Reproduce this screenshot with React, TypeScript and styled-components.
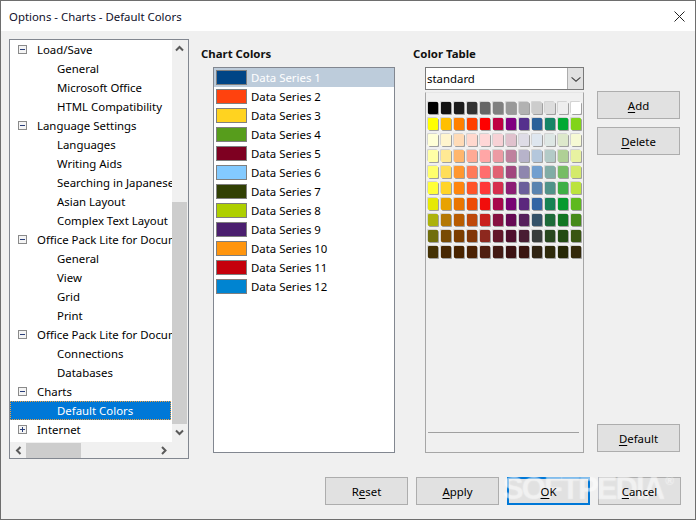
import React from "react";
import styled, { createGlobalStyle } from "styled-components";

const Global = createGlobalStyle`
  html, body { margin: 0; padding: 0; background: #f0f0f0; }
  * { box-sizing: border-box; }
  u { text-underline-offset: 2px; text-decoration-thickness: 1px; }
`;

const Window = styled.div`
  position: relative;
  width: 696px;
  height: 520px;
  border: 1px solid #6e6e6e;
  background: #f0f0f0;
  font-family: "Noto Sans", "Open Sans", sans-serif;
  font-size: 11.4px;
  color: #000;
  overflow: hidden;
  display: flex;
  flex-direction: column;
`;
const TitleBar = styled.div`
  height: 30px;
  flex: none;
  background: #fff;
  display: flex;
  align-items: center;
  justify-content: space-between;
  padding: 0 10px 0 8px;
  color: #10102a;
`;
const Main = styled.div`
  display: flex;
  height: 420px;
  margin: 8px 0 0 8px;
  flex: none;
`;
const Tree = styled.div`
  width: 180px;
  height: 420px;
  flex: none;
  border: 1px solid #828790;
  display: grid;
  grid-template-columns: 162px 16px;
  grid-template-rows: 402px 16px;
`;
const TreeRows = styled.div`
  background: #fff;
  overflow: hidden;
  min-width: 0;
`;
const TreeRow = styled.div<{ $level: number; $selected?: boolean }>`
  height: 19px;
  line-height: 18px;
  display: flex;
  align-items: center;
  white-space: nowrap;
  overflow: hidden;
  padding-left: ${(p) => (p.$level === 0 ? 8 : 47)}px;
  margin-right: ${(p) => (p.$selected ? 1 : 0)}px;
  background: ${(p) => (p.$selected ? "#0078d7" : "transparent")};
  color: ${(p) => (p.$selected ? "#fff" : "#000")};
  outline: ${(p) => (p.$selected ? "1px dotted #f0a040" : "none")};
  outline-offset: -1px;
`;
const Expander = styled.svg`
  width: 9px;
  height: 9px;
  flex: none;
  margin-right: 10px;
`;
const VScroll = styled.div`
  background: #f0f0f0;
  display: flex;
  flex-direction: column;
  align-items: flex-start;
`;
const ArrowBox = styled.div`
  height: 17px;
  width: 15px;
  flex: none;
  display: flex;
  align-items: center;
  justify-content: center;
`;
const VSpace = styled.div`
  height: 145px;
  flex: none;
`;
const VThumb = styled.div`
  width: 15px;
  height: 222px;
  flex: none;
  background: #cdcdcd;
`;
const HScroll = styled.div`
  background: #f0f0f0;
  display: flex;
  align-items: center;
`;
const HArrowBox = styled.div`
  width: 16px;
  height: 16px;
  flex: none;
  display: flex;
  align-items: center;
  justify-content: center;
`;
const HThumb = styled.div`
  width: 55px;
  height: 15px;
  flex: none;
  background: #cdcdcd;
`;
const HSpace = styled.div`
  flex: 1;
`;
const Corner = styled.div`
  background: #f0f0f0;
`;
const Column = styled.div<{ $width: number; $gap: number }>`
  width: ${(p) => p.$width}px;
  margin-left: ${(p) => p.$gap}px;
  flex: none;
`;
const Heading = styled.div`
  font-weight: 700;
  line-height: 18px;
  margin: 6px 0 4px;
  color: #111;
`;
const SeriesList = styled.div`
  margin-left: 12px;
  width: 182px;
  height: 386px;
  background: #fff;
  border: 1px solid #828790;
`;
const SeriesRow = styled.div<{ $selected?: boolean }>`
  height: 19px;
  display: flex;
  align-items: center;
  padding-left: 2px;
  background: ${(p) => (p.$selected ? "#bdccdb" : "transparent")};
  color: ${(p) => (p.$selected ? "#fff" : "#000")};
`;
const SeriesSwatch = styled.div<{ $color: string }>`
  width: 31px;
  height: 15px;
  flex: none;
  margin-right: 4px;
  border: 1px solid #7f7f7f;
  background: ${(p) => p.$color};
`;
const Combo = styled.div`
  margin-left: 12px;
  width: 159px;
  height: 23px;
  display: flex;
  background: #fff;
  border: 1px solid #7a7a7a;
  align-items: stretch;
`;
const ComboText = styled.div`
  flex: 1;
  padding-left: 1px;
  line-height: 21px;
`;
const ComboButton = styled.div`
  width: 16px;
  background: #e1e1e1;
  border-left: 1px solid #adadad;
  display: flex;
  align-items: center;
  justify-content: center;
`;
const TablePanel = styled.div`
  margin: 2px 0 0 12px;
  width: 159px;
  height: 361px;
  border: 1px solid #a6a6a6;
  border-top-color: #e6e6e6;
  display: flex;
  flex-direction: column;
  padding: 9px 0 0 2px;
`;
const Palette = styled.div`
  display: grid;
  grid-template-columns: repeat(12, 10px);
  grid-auto-rows: 12px;
  column-gap: 3px;
  row-gap: 4px;
`;
const Cell = styled.div<{ $color: string }>`
  background: ${(p) => p.$color};
  border-radius: 1px;
  box-shadow: 1px 1px 0 #a0a0a0, -1px -1px 0 rgba(160, 160, 160, 0.35);
`;
const TableRule = styled.div`
  margin: auto 4px 19px 0;
  height: 1px;
  background: #a0a0a0;
`;
const ButtonColumn = styled.div`
  width: 83px;
  margin-left: 13px;
  flex: none;
  display: flex;
  flex-direction: column;
  gap: 8px;
  padding: 52px 0 7px;
`;
const Btn = styled.div<{ $focus?: boolean }>`
  width: 83px;
  height: 28px;
  flex: none;
  background: #e1e1e1;
  border: ${(p) => (p.$focus ? "2px solid #0078d7" : "1px solid #adadad")};
  display: flex;
  align-items: center;
  justify-content: center;
  line-height: 16px;
  padding-top: 2px;
`;
const BtnLabel = styled.span`
  position: relative;
  z-index: 2;
`;
const PushDown = styled.div`
  flex: 1;
`;
const Footer = styled.div`
  display: flex;
  gap: 8px;
  margin: 18px 0 0 324px;
`;
const Watermark = styled.div`
  position: absolute;
  z-index: 1;
  left: 502px;
  top: 462px;
  font-family: "Liberation Sans", sans-serif;
  font-weight: 700;
  font-size: 31px;
  line-height: 36px;
  letter-spacing: -1.9px;
  color: rgba(255, 255, 255, 0.32);
  text-shadow: 0 0 2px rgba(255, 255, 255, 0.4);
  pointer-events: none;
  white-space: nowrap;
`;
const WatermarkMark = styled.span`
  font-size: 12px;
  letter-spacing: 0;
  vertical-align: 14px;
  margin-left: 2px;
`;

const tree: [number, string, ("minus" | "plus")?, boolean?][] = [
  [0, "Load/Save", "minus"],
  [1, "General"],
  [1, "Microsoft Office"],
  [1, "HTML Compatibility"],
  [0, "Language Settings", "minus"],
  [1, "Languages"],
  [1, "Writing Aids"],
  [1, "Searching in Japanese"],
  [1, "Asian Layout"],
  [1, "Complex Text Layout"],
  [0, "Office Pack Lite for Documents", "minus"],
  [1, "General"],
  [1, "View"],
  [1, "Grid"],
  [1, "Print"],
  [0, "Office Pack Lite for Documents", "minus"],
  [1, "Connections"],
  [1, "Databases"],
  [0, "Charts", "minus"],
  [1, "Default Colors", undefined, true],
  [0, "Internet", "plus"],
];

const series = ["#004586","#ff420e","#ffd320","#579d1c","#7e0021","#83caff","#314004","#aecf00","#4b1f6f","#ff950e","#c5000b","#0084d1"];

const palette = [
  "#000000","#111111","#1c1c1c","#333333","#666666","#808080","#999999","#b2b2b2","#cccccc","#dddddd","#eeeeee","#ffffff",
  "#ffff00","#ffbf00","#ff8000","#ff4000","#ff0000","#bf0041","#800080","#55308d","#2a6099","#158466","#00a933","#81d41a",
  "#ffffd7","#fff5ce","#ffdbb6","#ffd8ce","#ffd7d7","#f7d1d5","#e0c2cd","#dedce6","#dee6ef","#dee7e5","#dde8cb","#f6f9d4",
  "#ffffa6","#ffe994","#ffb66c","#ffaa95","#ffa6a6","#ec9ba4","#bf819e","#b7b3ca","#b4c7dc","#b3cac7","#afd095","#e8f2a1",
  "#ffff6d","#ffde59","#ff972f","#ff7b59","#ff6d6d","#e16173","#a1467e","#8e86ae","#729fcf","#81aca6","#77bc65","#d4ea6b",
  "#ffff38","#ffd428","#ff860d","#ff5429","#ff3838","#d62e4e","#8d1d75","#6b5e9b","#5983b0","#50938a","#3faf46","#bbe33d",
  "#e6e905","#e8a202","#ea7500","#ed4c05","#f10d0c","#a7074b","#780373","#5b277d","#3465a4","#168253","#069a2e","#5eb91e",
  "#acb20c","#b47804","#b85c00","#be480a","#c9211e","#861141","#650953","#55215b","#355269","#1e6a39","#127622","#468a1a",
  "#706e0c","#784b04","#7b3d00","#813709","#8d281e","#611729","#4e102d","#481d32","#383d3c","#28471f","#224b12","#395511",
  "#443205","#472702","#482300","#4b2204","#4f1f10","#431a14","#3c1212","#3a1510","#2f2312","#2e2a0b","#262806","#33290a",
];

const ExpandIcon = ({ kind }: { kind: "minus" | "plus" }) => (
  <Expander viewBox="0 0 9 9">
    <rect x="0.5" y="0.5" width="8" height="8" fill="#f4f4f4" stroke="#8a8a8a" />
    <path d={kind === "minus" ? "M2 4.5H7" : "M2 4.5H7M4.5 2V7"} stroke="#2a3f7a" fill="none" />
  </Expander>
);

const Chevron = ({ d, w = 9, h = 9, stroke = "#5a5a5a", sw = 2 }: { d: string; w?: number; h?: number; stroke?: string; sw?: number }) => (
  <svg width={w} height={h} viewBox="0 0 9 9" fill="none">
    <path d={d} stroke={stroke} strokeWidth={sw} />
  </svg>
);

export default function App() {
  return (
    <Window>
      <Global />
      <TitleBar>
        <span>Options - Charts - Default Colors</span>
        <svg width="11" height="11" viewBox="0 0 11 11" fill="none">
          <path d="M0.5 0.5L10.5 10.5M10.5 0.5L0.5 10.5" stroke="#222" />
        </svg>
      </TitleBar>
      <Main>
        <Tree>
          <TreeRows>
            {tree.map(([level, label, exp, sel], i) => (
              <TreeRow key={i} $level={level} $selected={sel}>
                {exp && <ExpandIcon kind={exp} />}
                {label}
              </TreeRow>
            ))}
          </TreeRows>
          <VScroll>
            <ArrowBox><Chevron d="M1 6.5L4.5 3L8 6.5" /></ArrowBox>
            <VSpace />
            <VThumb />
            <ArrowBox><Chevron d="M1 2.5L4.5 6L8 2.5" /></ArrowBox>
          </VScroll>
          <HScroll>
            <HArrowBox><Chevron d="M6.5 1L3 4.5L6.5 8" /></HArrowBox>
            <HThumb />
            <HSpace />
            <HArrowBox><Chevron d="M2 1L5.5 4.5L2 8" /></HArrowBox>
          </HScroll>
          <Corner />
        </Tree>
        <Column $width={194} $gap={12}>
          <Heading>Chart Colors</Heading>
          <SeriesList>
            {series.map((c, i) => (
              <SeriesRow key={c} $selected={i === 0}>
                <SeriesSwatch $color={c} />
                Data Series {i + 1}
              </SeriesRow>
            ))}
          </SeriesList>
        </Column>
        <Column $width={171} $gap={18}>
          <Heading>Color Table</Heading>
          <Combo>
            <ComboText>standard</ComboText>
            <ComboButton>
              <Chevron d="M0.5 3L4.5 6.5L8.5 3" stroke="#444" sw={1} w={10} h={10} />
            </ComboButton>
          </Combo>
          <TablePanel>
            <Palette>
              {palette.map((c, i) => (
                <Cell key={i} $color={c} />
              ))}
            </Palette>
            <TableRule />
          </TablePanel>
        </Column>
        <ButtonColumn>
          <Btn><BtnLabel><u>A</u>dd</BtnLabel></Btn>
          <Btn><BtnLabel><u>D</u>elete</BtnLabel></Btn>
          <PushDown />
          <Btn><BtnLabel><u>D</u>efault</BtnLabel></Btn>
        </ButtonColumn>
      </Main>
      <Footer>
        <Btn><BtnLabel>R<u>e</u>set</BtnLabel></Btn>
        <Btn><BtnLabel><u>A</u>pply</BtnLabel></Btn>
        <Btn $focus><BtnLabel><u>O</u>K</BtnLabel></Btn>
        <Btn><BtnLabel><u>C</u>ancel</BtnLabel></Btn>
      </Footer>
      <Watermark>SOFTPEDIA<WatermarkMark>®</WatermarkMark></Watermark>
    </Window>
  );
}
